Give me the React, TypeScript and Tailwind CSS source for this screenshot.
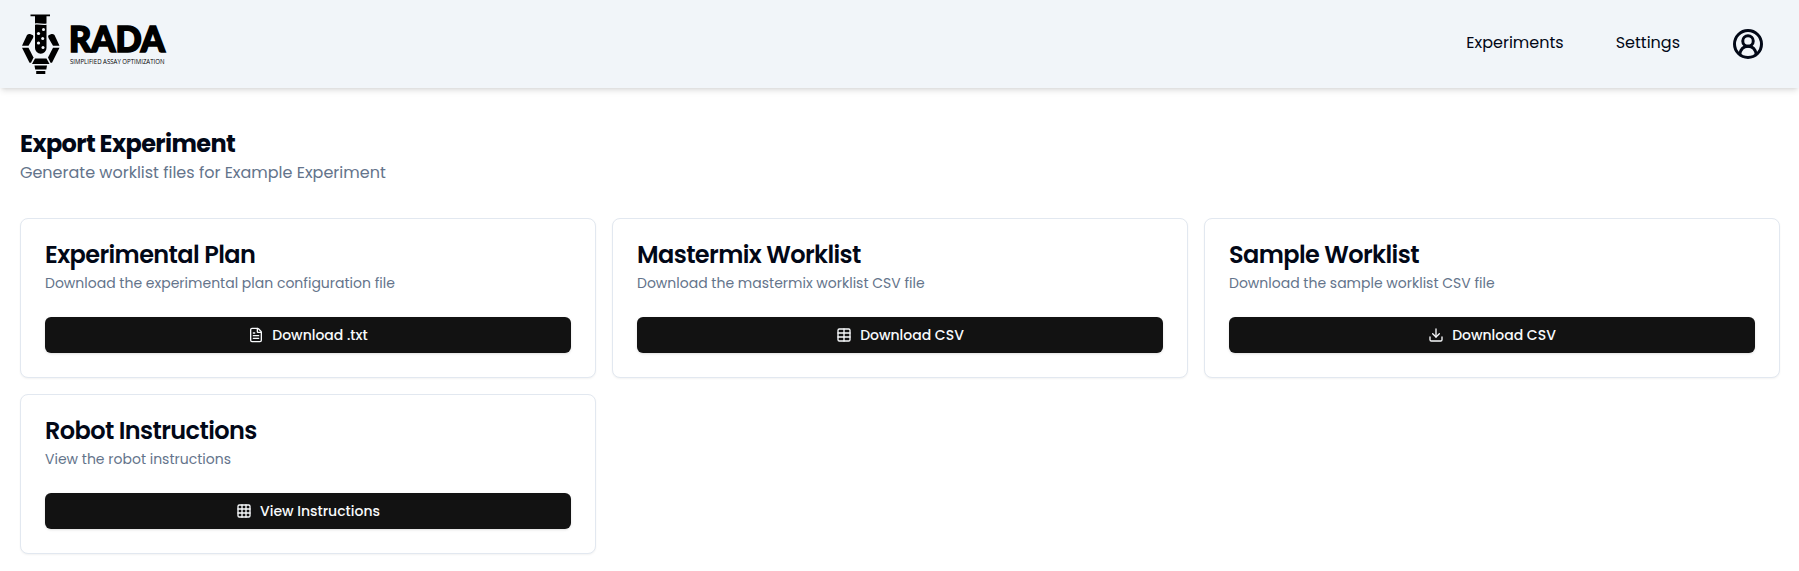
import type { ReactNode } from "react";
import { Download, FileText, Grid3x3, Table } from "lucide-react";

function LogoMark() {
  return (
    <svg width="38" height="62" viewBox="0 0 38 62" fill="#000">
      <path d="M8.5 0.5H28V2.3H24.5V9.5C21 10.3 16 8.7 13 9.5V2.3H8.5Z" />
      <path d="M13 10.8C16 10 21 11.6 24.5 10.8V34A5.75 5.75 0 0 1 13 34Z" />
      <g fill="#f1f5f9">
        <circle cx="21.5" cy="15.5" r="1.5" />
        <circle cx="16.5" cy="19.5" r="1.6" />
        <circle cx="20.7" cy="24.5" r="1.5" />
        <circle cx="16.5" cy="29" r="1.6" />
        <circle cx="21" cy="33.5" r="1.5" />
      </g>
      <path d="M5 21Q6.5 19.5 8 20L11 21.3Q11.8 22.3 11 24L6.5 31.7H0Z" />
      <path d="M32.5 21Q31 19.5 29.5 20L26.5 21.3Q25.7 22.3 26.5 24L31 31.7H37.5Z" />
      <path d="M0 33.7H6.5L11.5 43.5L9 48.7H7.5Z" />
      <path d="M37.5 33.7H31L26 43.5L28.5 48.7H30Z" />
      <path d="M13 44.5H24.5L27.5 50H10Z" />
      <path d="M12.5 51.5H25L24.3 55.5H13.2Z" />
      <path d="M14.2 57H23.3V60H14.2Z" />
    </svg>
  );
}

function Logo() {
  return (
    <a href="#" className="flex items-start text-black">
      <LogoMark />
      <svg width="98" height="54" viewBox="0 -10 98 54" className="ml-2.5 overflow-visible">
        <text x="-1" y="28.2" textLength="96" lengthAdjust="spacingAndGlyphs" fontSize="35.5" fontWeight="900" fontFamily="Lato, sans-serif" stroke="#000" strokeWidth="1.7">RADA</text>
        <text x="0" y="39.8" textLength="94.5" lengthAdjust="spacingAndGlyphs" fontSize="7.3" fontWeight="500" fontFamily="'Open Sans', sans-serif">SIMPLIFIED ASSAY OPTIMIZATION</text>
      </svg>
    </a>
  );
}

function UserIcon() {
  return (
    <svg width="36" height="36" viewBox="0 0 24 24" fill="none" stroke="currentColor" strokeWidth="2">
      <circle cx="12" cy="12" r="9" />
      <circle cx="12" cy="10" r="3.5" />
      <path d="M6.5 19C7 15.5 9 13.5 12 13.5S17 15.5 17.5 19" />
    </svg>
  );
}

type CardProps = {
  title: string;
  description: string;
  action: string;
  icon: ReactNode;
};

function ExportCard({ title, description, action, icon }: CardProps) {
  return (
    <section className="rounded-lg border border-[#e2e8f0] bg-white p-6 shadow-xs">
      <h3 className="text-2xl leading-none font-semibold tracking-tight">{title}</h3>
      <p className="mt-1.5 text-sm text-[#64748b]">{description}</p>
      <button className="mt-6 flex h-9 w-full items-center justify-center gap-2 rounded-md bg-[#121212] text-sm font-medium text-slate-50 shadow-sm">
        {icon}
        {action}
      </button>
    </section>
  );
}

const cards: CardProps[] = [
  {
    title: "Experimental Plan",
    description: "Download the experimental plan configuration file",
    action: "Download .txt",
    icon: <FileText size={16} />,
  },
  {
    title: "Mastermix Worklist",
    description: "Download the mastermix worklist CSV file",
    action: "Download CSV",
    icon: <Table size={16} />,
  },
  {
    title: "Sample Worklist",
    description: "Download the sample worklist CSV file",
    action: "Download CSV",
    icon: <Download size={16} />,
  },
  {
    title: "Robot Instructions",
    description: "View the robot instructions",
    action: "View Instructions",
    icon: <Grid3x3 size={16} />,
  },
];

export default function App() {
  return (
    <div className="min-h-[571px] bg-white font-['Poppins','Inter',sans-serif] text-[#020817]">
      <header className="flex h-22 items-start justify-between bg-slate-100 pt-3.5 pr-[33px] pl-[22px] shadow-md">
        <Logo />
        <nav className="flex items-start pt-3">
          <a href="#" className="mt-[5px] mr-[52px]">Experiments</a>
          <a href="#" className="mt-[5px] mr-[50px]">Settings</a>
          <UserIcon />
        </nav>
      </header>
      <main className="pt-10 pr-[19px] pl-5">
        <h1 className="text-2xl leading-8 font-bold tracking-tight">Export Experiment</h1>
        <p className="mt-px text-[#64748b]">Generate worklist files for Example Experiment</p>
        <div className="mt-[33px] grid grid-cols-3 gap-4">
          {cards.map((card) => (
            <ExportCard key={card.title} {...card} />
          ))}
        </div>
      </main>
    </div>
  );
}
